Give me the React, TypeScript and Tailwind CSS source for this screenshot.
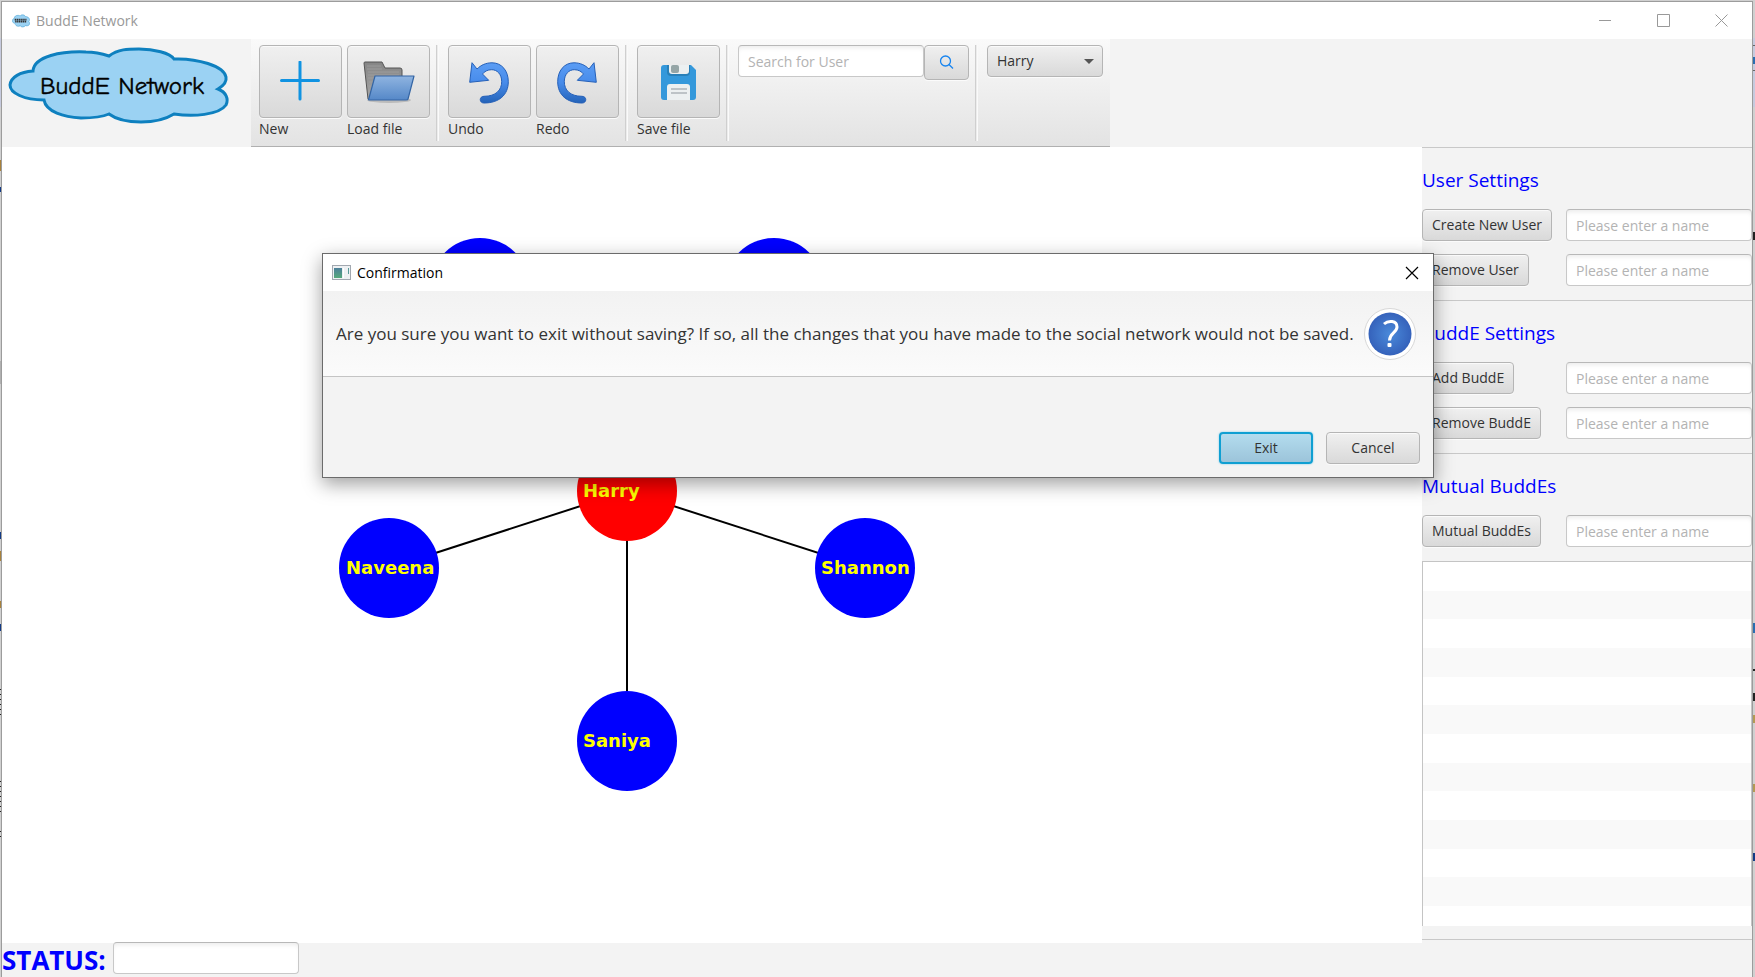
import { ReactNode } from "react";

const raised =
  "rounded-[4px] border border-[#b5b5b5] bg-linear-to-b from-[#f0f0f0] to-[#d9d9d9] shadow-[inset_0_1px_0_#fafafa,0_1px_0_#fbfbfb] text-[#333333]";
const field =
  "rounded-[4px] border border-[#c8c8c8] border-t-[#b8b8b8] bg-white shadow-[inset_0_4px_4px_-2px_#ececec] px-[9px] text-[14px] text-[#333333] placeholder:text-[#b3b3b3]";

const nodes = [
  { id: "south", x: 627, y: 741 },
  { id: "west", x: 389, y: 568 },
  { id: "northwest", x: 480, y: 288 },
  { id: "northeast", x: 774, y: 288 },
  { id: "east", x: 865, y: 568 },
];

const stripes = Array.from({ length: 12 }, (_, i) => i);

function CloudShape() {
  return (
    <path
      d="M33 31C34 16 62 11 86 12C94 12 103 14 109 16C118 9 128 9 139 9C154 9 170 13 174 19C197 18 224 26 226 37C227 42 223 46 218 49C226 52 229 59 226 65C219 75 193 77 174 74C166 79 155 82 141 82C128 82 117 80 109 74C100 78 90 78 81 78C64 77 46 72 44 60C24 60 10 53 10 45C11 37 20 32 33 31Z"
      fill="#9bd2f3"
      stroke="#0e80bf"
      strokeWidth="3"
    />
  );
}

function Divider() {
  return <div className="mx-[2px] mt-[6px] mb-[5px] w-[3px] border-x border-l-[#cfcfcf] border-r-[#fafafa] bg-[#ececec]" />;
}

function Tool({ label, children }: { label: string; children: ReactNode }) {
  return (
    <label className="flex w-[83px] flex-col text-[14px] leading-[20px] text-[#333333]">
      <button className={`${raised} flex h-[73px] items-center justify-center`} aria-label={label}>
        {children}
      </button>
      <span className="mt-px">{label}</span>
    </label>
  );
}

function UndoArrow() {
  return (
    <path
      d="M3 .7L8 7C12 3 17 .8 23 .8C33 .8 39.3 9 39.3 19.7C39.3 33 30 41 15 41C10 41 10 34.3 15 34.3C27 34.3 32.7 28 32.7 19.7C32.7 12 28 7.7 22.7 7.7C18.5 7.7 15.5 9.5 13.5 12L19.7 18.3L.7 20.3Z"
      fill="url(#arrow)"
      stroke="#2560b8"
      strokeWidth="1"
      strokeLinejoin="round"
    />
  );
}

function SettingRow({ label }: { label: string }) {
  return (
    <div className="flex h-[32px] justify-between">
      <button className={`${raised} h-[32px] px-[9px] pb-[2px] text-[14px]`}>{label}</button>
      <input className={`${field} w-[186px]`} placeholder="Please enter a name" aria-label={label} />
    </div>
  );
}

function Section({ title, children }: { title: string; children: ReactNode }) {
  return (
    <section className="border-t border-[#c8c8c8] pt-[18px] pb-[14px]">
      <h2 className="mb-[15px] text-[19px] leading-[28px] text-[#0000ff]">{title}</h2>
      <div className="flex flex-col gap-[13px]">{children}</div>
    </section>
  );
}

function Dialog() {
  return (
    <div
      role="dialog"
      aria-label="Confirmation"
      className="absolute top-[253px] left-[322px] w-[1112px] border border-[#6b6b6b] bg-[#f3f3f3] shadow-[0_6px_18px_rgba(0,0,0,0.38)]"
    >
      <div className="flex h-[37px] items-center bg-white pr-[14px] pl-[9px]">
        <svg width="19" height="16" viewBox="0 0 19 16">
          <defs>
            <linearGradient id="app" x1="0" y1="0" x2="0" y2="1">
              <stop offset="0" stopColor="#4c7f9a" />
              <stop offset="1" stopColor="#55a97b" />
            </linearGradient>
          </defs>
          <rect x=".5" y=".5" width="18" height="14" fill="#eef1f3" stroke="#a2a8b0" />
          <rect x="2" y="3" width="8" height="10" fill="url(#app)" />
          <path d="M11.500 3V13" stroke="#fff" />
          <path d="M16.500 3V9" stroke="#5b9a9a" />
        </svg>
        <span className="ml-[6px] flex-1 text-[14px] text-black">Confirmation</span>
        <button aria-label="Close">
          <svg width="14" height="14" viewBox="0 0 14 14" stroke="#000" strokeWidth="1.2">
            <path d="M1 1L13 13M13 1L1 13" />
          </svg>
        </button>
      </div>
      <div className="flex h-[86px] items-center justify-between border-b border-[#c4c4c4] bg-linear-to-b from-[#f2f2f2] to-[#fbfbfb] pr-[16px] pl-[13px]">
        <p className="text-[17px] whitespace-nowrap text-[#333333]">
          Are you sure you want to exit without saving? If so, all the changes that you have made to the social network would not be saved.
        </p>
        <svg width="54" height="54" viewBox="0 0 54 54">
          <defs>
            <radialGradient id="q">
              <stop offset="0" stopColor="#4a8ada" />
              <stop offset="1" stopColor="#3562bb" />
            </radialGradient>
          </defs>
          <circle cx="27" cy="27" r="25.500" fill="#fff" stroke="#d8d8d8" />
          <circle cx="27" cy="27" r="21.500" fill="url(#q)" />
          <path d="M21 17C25.500 13 34 13.500 34 20C34 25.500 26.500 26 26.500 33.500" fill="none" stroke="#fff" strokeWidth="3" />
          <rect x="24.500" y="36" width="4" height="4" rx="1" fill="#fff" />
        </svg>
      </div>
      <div className="flex justify-end gap-[13px] pt-[55px] pr-[13px] pb-[13px] text-[14px]">
        <button className="h-[32px] w-[94px] rounded-[4px] border-2 border-[#0f9fd2] bg-linear-to-b from-[#b3dcee] to-[#9cc4da] pb-[2px] text-[#333333] shadow-[0_0_2px_#6cc5e6]">
          Exit
        </button>
        <button className={`${raised} h-[32px] w-[94px] pb-[2px]`}>Cancel</button>
      </div>
    </div>
  );
}

export default function App() {
  return (
    <div className="relative flex h-screen min-h-[720px] overflow-hidden bg-[#d0d0d0] pt-px font-['Open_Sans','Noto_Sans',sans-serif]">
      <svg className="h-full w-px shrink-0" aria-hidden="true">
        <path d="M.5 37V106" stroke="#c6cade" />
        <path d="M.5 159V170M.5 550V560M.5 600V607" stroke="#a8813a" />
        <path d="M.5 186V191M.5 531V538M.5 623V630" stroke="#123a86" />
        <path d="M.5 360V383" stroke="#b0b0b0" />
        <path d="M.5 688V716M.5 780V814M.5 830V838" stroke="#222" strokeDasharray="1 4" />
      </svg>
      <main className="flex min-w-0 flex-1 flex-col border border-b-0 border-[#9c9c9c] bg-[#f3f3f3]">
        <div className="flex h-[37px] shrink-0 items-center bg-white pr-[24px] pl-[10px]">
          <svg width="18" height="14" viewBox="6 4 226 84" preserveAspectRatio="none">
            <CloudShape />
            <path d="M40 38H190M46 50H186" stroke="#333" strokeWidth="11" strokeDasharray="18 6" />
          </svg>
          <span className="ml-[6px] flex-1 text-[14px] text-[#999999]">BuddE Network</span>
          <div className="flex gap-[45px]">
            <button aria-label="Minimize">
              <svg width="13" height="13" stroke="#999">
                <path d="M0 6.500H12" />
              </svg>
            </button>
            <button aria-label="Maximize">
              <svg width="13" height="13" stroke="#999" fill="none">
                <path d="M.5 .5H12.500V12.500H.5Z" />
              </svg>
            </button>
            <button aria-label="Close window">
              <svg width="13" height="13" stroke="#999" fill="none">
                <path d="M.5 .5L12.500 12.500M12.500 .5L.5 12.500" />
              </svg>
            </button>
          </div>
        </div>

        <header className="flex h-[108px] shrink-0">
          <svg className="w-[249px] shrink-0" height="108" viewBox="2 -1 249 108">
            <CloudShape />
            <text x="40" y="54" fontSize="25" fill="#000" stroke="#000" strokeWidth=".4" fontFamily="'Comic Neue','Comic Sans MS',Lato,sans-serif">
              BuddE Network
            </text>
          </svg>
          <div className="flex border-b border-[#b0b0b0] bg-linear-to-b from-[#fafafa] to-[#e3e3e3] px-[7px] pl-[8px]">
            <div className="flex gap-[5px] pt-[6px] pr-[4px]">
              <Tool label="New">
                <svg width="41" height="42" viewBox="0 0 41 42" stroke="#1093e2" strokeWidth="3" strokeLinecap="round">
                  <path d="M1.500 19.500H38.500M20 1V38" />
                </svg>
              </Tool>
              <Tool label="Load file">
                <svg width="54" height="44" viewBox="0 0 54 44">
                  <defs>
                    <linearGradient id="fold" x1="0" y1="0" x2="0" y2="1">
                      <stop offset="0" stopColor="#8fb4e0" />
                      <stop offset="1" stopColor="#5588c8" />
                    </linearGradient>
                    <linearGradient id="back" x1="0" y1="0" x2="0" y2="1">
                      <stop offset="0" stopColor="#858585" />
                      <stop offset="1" stopColor="#a5a5a5" />
                    </linearGradient>
                  </defs>
                  <ellipse cx="27" cy="40" rx="22" ry="3" fill="#bbb" />
                  <path d="M2 3Q2 2 3 2H20L23 8H38Q40 8 40 10V30L8 39H6Z" fill="url(#back)" stroke="#555" />
                  <path d="M5 6H19M5 9H20M6 12H37M6 15H37M6 18H37M7 22H20M7 26H20M7 30H20" stroke="#a5a5a5" strokeWidth=".7" />
                  <path d="M13 16H52L46 39Q46 40 44 40H7Q6 40 7 38Z" fill="url(#fold)" stroke="#3465a4" strokeWidth="1.200" strokeLinejoin="round" />
                </svg>
              </Tool>
            </div>
            <Divider />
            <div className="flex gap-[5px] px-[4px] pt-[6px] pl-[7px]">
              <Tool label="Undo">
                <svg width="42" height="42" viewBox="0 -1 42 42" overflow="visible">
                  <defs>
                    <linearGradient id="arrow" x1="0" y1="0" x2="0" y2="1">
                      <stop offset="0" stopColor="#5b9df5" />
                      <stop offset=".5" stopColor="#478bea" />
                      <stop offset="1" stopColor="#2463b8" />
                    </linearGradient>
                  </defs>
                  <UndoArrow />
                </svg>
              </Tool>
              <Tool label="Redo">
                <svg width="42" height="42" viewBox="0 -1 42 42" overflow="visible">
                  <g transform="matrix(-1 0 0 1 40 0)">
                    <UndoArrow />
                  </g>
                </svg>
              </Tool>
            </div>
            <Divider />
            <div className="pt-[6px] pr-[4px] pl-[7px]">
              <Tool label="Save file">
                <svg width="36" height="36" viewBox="0 -1 36 36">
                  <path d="M3 0H30L35 5V32Q35 35 32 35H3Q0 35 0 32V3Q0 0 3 0Z" fill="#3498db" />
                  <path d="M6 0H29V7Q29 11 25 11H10Q6 11 6 7Z" fill="#2980b9" />
                  <path d="M8 0H28V6Q28 9 25 9H11Q8 9 8 6Z" fill="#ecf0f1" />
                  <rect x="10" y="0" width="8" height="8" rx="2" fill="#95a5a6" />
                  <path d="M6 35V22Q6 19 9 19H26Q29 19 29 22V35Z" fill="#ecf0f1" />
                  <path d="M10 24H26M10 28H26" stroke="#bdc3c7" strokeWidth="2" />
                </svg>
              </Tool>
            </div>
            <Divider />
            <div className="flex items-start px-[4px] pt-[6px] pl-[7px]">
              <input className={`${field} h-[32px] w-[186px]`} placeholder="Search for User" aria-label="Search for User" />
              <button className={`${raised} flex h-[35px] w-[45px] items-center justify-center`} aria-label="Search">
                <svg width="15" height="15" viewBox="0 0 15 15" fill="none" stroke="#1684f0" strokeWidth="1.300">
                  <circle cx="6.500" cy="6" r="5" />
                  <path d="M10 9.500L14 13.500" />
                </svg>
              </button>
            </div>
            <Divider />
            <div className="pt-[6px] pl-[7px]">
              <div className="relative">
                <select className={`${raised} h-[32px] w-[116px] appearance-none px-[9px] pb-[2px] text-[14px]`} aria-label="Current user">
                  <option>Harry</option>
                </select>
                <svg className="pointer-events-none absolute top-[14px] right-[9px]" width="10" height="6">
                  <path d="M0 0H10L5 5Z" fill="#555" />
                </svg>
              </div>
            </div>
          </div>
        </header>

        <div className="flex min-h-0 flex-1">
          <div className="min-w-0 flex-1 overflow-hidden bg-white">
            <svg className="h-full w-full" viewBox="2 147 1420 796" preserveAspectRatio="xMinYMin meet">
              {nodes.map((n) => (
                <line key={n.id} x1="627" y1="491" x2={n.x} y2={n.y} stroke="#000" strokeWidth="2" />
              ))}
              {nodes.map((n) => (
                <circle key={n.id} cx={n.x} cy={n.y} r="50" fill="#0000ff" />
              ))}
              <circle cx="627" cy="491" r="50" fill="#ff0000" />
              <g fill="#ffff00" fontFamily="'DejaVu Sans',sans-serif" fontWeight="700" fontSize="18">
                <text x="583" y="497">Harry</text>
                <text x="583" y="747">Saniya</text>
                <text x="346" y="574">Naveena</text>
                <text x="821" y="574">Shannon</text>
              </g>
            </svg>
          </div>
          <aside className="flex w-[330px] shrink-0 flex-col">
            <Section title="User Settings">
              <SettingRow label="Create New User" />
              <SettingRow label="Remove User" />
            </Section>
            <Section title="BuddE Settings">
              <SettingRow label="Add BuddE" />
              <SettingRow label="Remove BuddE" />
            </Section>
            <Section title="Mutual BuddEs">
              <SettingRow label="Mutual BuddEs" />
            </Section>
            <ul className="flex min-h-0 flex-1 flex-col border border-b-0 border-[#c4c4c4] bg-white" aria-label="Mutual BuddEs results">
              {stripes.map((i) => (
                <li key={i} className="flex-1 odd:bg-white even:bg-[#f9f9f9]" />
              ))}
              <li className="h-[20px]" />
            </ul>
            <div className="mt-[13px] h-[4px] border-t border-[#c8c8c8]" />
          </aside>
        </div>

        <footer className="flex h-[34px] shrink-0 items-start gap-[7px]">
          <label htmlFor="status" className="text-[26px] leading-[34px] font-bold text-[#0000ff]">
            STATUS:
          </label>
          <input id="status" className={`${field} -mt-px h-[32px] w-[186px]`} />
        </footer>
      </main>
      <svg className="h-full w-[2px] shrink-0" aria-hidden="true">
        <path d="M1 37V106" stroke="#c6cade" strokeWidth="2" />
        <path d="M0 44.500H2M0 69.500H2" stroke="#666" />
        <path d="M1 231V239M1 668V670M1 692V700" stroke="#222" strokeWidth="2" />
        <path d="M1 56V63M1 622V632" stroke="#2a6db0" strokeWidth="2" />
        <path d="M1 714V722M1 783V791" stroke="#b39a55" strokeWidth="2" />
        <path d="M1 852V860" stroke="#123a86" strokeWidth="2" />
      </svg>
      <Dialog />
    </div>
  );
}
